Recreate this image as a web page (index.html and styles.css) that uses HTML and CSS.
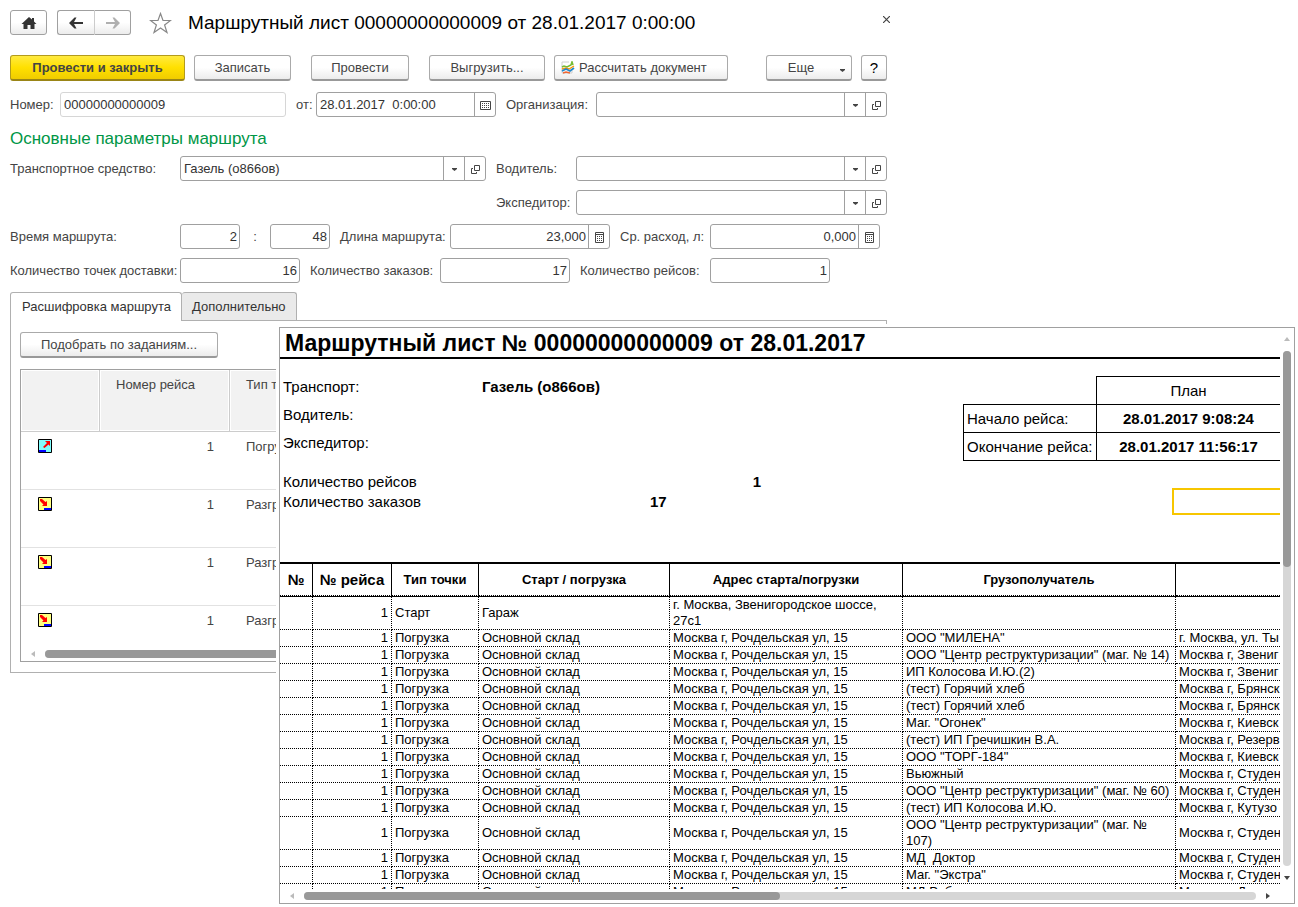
FILE: index.html
```html
<!DOCTYPE html>
<html lang="ru">
<head>
<meta charset="utf-8">
<title>Маршрутный лист</title>
<link rel="stylesheet" href="styles.css">
</head>
<body>
<svg width="0" height="0" class="sprite" aria-hidden="true">
  <symbol id="i-down" viewBox="0 0 5 3"><path d="M0 0H5V1L2.5 3L0 1z" fill="#444"/></symbol>
  <symbol id="i-open" viewBox="0 0 9 9"><path d="M3.5 .5H8.500V5.500H3.500zM2 3.500H.5V8.500H5.500V7" fill="none" stroke="#444"/></symbol>
  <symbol id="i-cal" viewBox="0 0 11 9"><path d="M.5 .5H10.500V8.500H.5z" fill="none" stroke="#444"/><path d="M2 2.500H9M2 4.500H9M2 6.500H9" stroke="#444" stroke-dasharray="1 1"/></symbol>
  <symbol id="i-calc" viewBox="0 0 9 11"><path d="M.5 .5H8.500V10.500H.5zM.5 2.500H8.500" fill="none" stroke="#444"/><path d="M2 4.500H7M2 6.500H7M2 8.500H7" stroke="#444" stroke-dasharray="1 1"/></symbol>
  <symbol id="i-load" viewBox="0 0 14 14"><path d="M.5 .5H13.500V13.500H.5z" fill="#80ffff" stroke="#000"/><path d="M1 12H8" stroke="#00f" stroke-width="2"/><path d="M7 2H12V7L10.500 5.500L6.500 9L5 8L9 4z" fill="#f00"/></symbol>
  <symbol id="i-unload" viewBox="0 0 14 14"><path d="M.5 .5H13.500V13.500H.5z" fill="#ffff80" stroke="#000"/><path d="M6 12H13" stroke="#00f" stroke-width="2"/><path d="M2 2H4L7.500 5L9 4V9H4L5.500 7.500L2 4z" fill="#f00"/></symbol>
</svg>
<main class="page">
  <form class="form">
    <header class="head">
      <button type="button" class="btn nav" aria-label="Домой"><svg width="16" height="12" viewBox="0 0 16 12"><path d="M8 0L11 2.600V1H13V4.400L15.500 7H13.500V12H9.500V8H6.500V12H2.500V7H.5z" fill="#333"/></svg></button>
      <div class="pair">
        <button type="button" class="btn nav" aria-label="Назад"><svg width="14" height="12" viewBox="0 0 14 12"><path d="M0 6L5.500 .5H7.500L5 5H14V7H5L7.500 11.500H5.500z" fill="#333"/></svg></button>
        <button type="button" class="btn nav" aria-label="Вперед"><svg width="14" height="12" viewBox="0 0 14 12"><path d="M14 6L8.500 .5H6.500L9 5H0V7H9L6.500 11.500H8.500z" fill="#b0b0b0"/></svg></button>
      </div>
      <svg class="star" width="23" height="22" viewBox="0 0 23 22"><path d="M11.500 1.500L14 8.500H21.500L15.600 13L18 20.500L11.500 16L5 20.500L7.400 13L1.500 8.500H9z" fill="none" stroke="#888" stroke-width="1.200"/></svg>
      <h1>Маршрутный лист 00000000000009 от 28.01.2017 0:00:00</h1>
      <button type="button" class="close" aria-label="Закрыть"><svg width="7" height="7" viewBox="0 0 7 7"><path d="M0 0L7 7M7 0L0 7" stroke="#444" stroke-width="1.200"/></svg></button>
    </header>

    <div class="bar">
      <button type="button" class="btn primary w175">Провести и закрыть</button>
      <button type="button" class="btn w97">Записать</button>
      <button type="button" class="btn w98 apart">Провести</button>
      <button type="button" class="btn w116 apart">Выгрузить...</button>
      <button type="button" class="btn w174 calc"><svg width="14" height="14" viewBox="0 0 14 14"><path d="M1 1H8M1 1V12H11V8" fill="none" stroke="#d0d0d0"/><path d="M1 6L3 5L6 6L10 4L11 1L12 4" fill="none" stroke="#7b3" stroke-width="1.600"/><path d="M1 8L5 7L8 8L13 5" fill="none" stroke="#f90" stroke-width="1.400"/><path d="M1 10L5 8L9 10L13 7" fill="none" stroke="#28c" stroke-width="1.800"/><path d="M2 12L5 11L9 12" fill="none" stroke="#e63" stroke-width="1.400"/></svg>Рассчитать документ</button>
      <button type="button" class="btn w86 more">Еще<svg width="5" height="3"><use href="#i-down"/></svg></button>
      <button type="button" class="btn w26 help">?</button>
    </div>

    <div class="row">
      <label for="num" class="l40">Номер:</label>
      <span class="field pale w226"><input id="num" value="00000000000009"></span>
      <label for="date" class="l10">от:</label>
      <span class="field w180"><input id="date" value="28.01.2017&nbsp; 0:00:00"><button type="button" aria-label="Календарь"><svg width="11" height="9"><use href="#i-cal"/></svg></button></span>
      <label for="org" class="l80">Организация:</label>
      <span class="field grow"><input id="org"><button type="button" aria-label="Выбрать"><svg width="5" height="3"><use href="#i-down"/></svg></button><button type="button" aria-label="Открыть"><svg width="9" height="9"><use href="#i-open"/></svg></button></span>
    </div>
    <h2>Основные параметры маршрута</h2>
    <div class="row">
      <label for="car" class="l160">Транспортное средство:</label>
      <span class="field w306"><input id="car" value="Газель (о866ов)"><button type="button" aria-label="Выбрать"><svg width="5" height="3"><use href="#i-down"/></svg></button><button type="button" aria-label="Открыть"><svg width="9" height="9"><use href="#i-open"/></svg></button></span>
      <label for="driver" class="l70">Водитель:</label>
      <span class="field grow"><input id="driver"><button type="button" aria-label="Выбрать"><svg width="5" height="3"><use href="#i-down"/></svg></button><button type="button" aria-label="Открыть"><svg width="9" height="9"><use href="#i-open"/></svg></button></span>
    </div>
    <div class="row indent">
      <label for="exp" class="l70">Экспедитор:</label>
      <span class="field grow"><input id="exp"><button type="button" aria-label="Выбрать"><svg width="5" height="3"><use href="#i-down"/></svg></button><button type="button" aria-label="Открыть"><svg width="9" height="9"><use href="#i-open"/></svg></button></span>
    </div>
    <div class="row">
      <label for="hours" class="l160">Время маршрута:</label>
      <span class="field num w60"><input id="hours" value="2"></span>
      <label for="mins" class="l10 colon">:</label>
      <span class="field num w60"><input id="mins" value="48"></span>
      <label for="len" class="l100">Длина маршрута:</label>
      <span class="field num w160"><input id="len" value="23,000"><button type="button" aria-label="Калькулятор"><svg width="9" height="11"><use href="#i-calc"/></svg></button></span>
      <label for="fuel" class="l80">Ср. расход, л:</label>
      <span class="field num w170"><input id="fuel" value="0,000"><button type="button" aria-label="Калькулятор"><svg width="9" height="11"><use href="#i-calc"/></svg></button></span>
    </div>
    <div class="row">
      <label for="pts" class="l160">Количество точек доставки:</label>
      <span class="field num w120"><input id="pts" value="16"></span>
      <label for="ords" class="l120">Количество заказов:</label>
      <span class="field num w130"><input id="ords" value="17"></span>
      <label for="trips" class="l120">Количество рейсов:</label>
      <span class="field num w120"><input id="trips" value="1"></span>
    </div>

    <div class="tabs" role="tablist">
      <button type="button" role="tab" aria-selected="true" class="tab active">Расшифровка маршрута</button>
      <button type="button" role="tab" aria-selected="false" class="tab">Дополнительно</button>
    </div>
    <section class="panel">
      <button type="button" class="btn w198">Подобрать по заданиям...</button>
      <div class="list">
        <table class="points">
          <colgroup><col class="c-ico"><col class="c-trip"><col></colgroup>
          <thead><tr><th></th><th>Номер рейса</th><th>Тип точки</th></tr></thead>
          <tbody>
            <tr><td><svg width="14" height="14"><use href="#i-load"/></svg></td><td class="r">1</td><td>Погрузка</td></tr>
            <tr><td><svg width="14" height="14"><use href="#i-unload"/></svg></td><td class="r">1</td><td>Разгрузка</td></tr>
            <tr><td><svg width="14" height="14"><use href="#i-unload"/></svg></td><td class="r">1</td><td>Разгрузка</td></tr>
            <tr><td><svg width="14" height="14"><use href="#i-unload"/></svg></td><td class="r">1</td><td>Разгрузка</td></tr>
          </tbody>
        </table>
        <div class="hbar"><svg width="4" height="6" viewBox="0 0 4 6"><path d="M4 0V6L0 3z" fill="#bbb"/></svg><div class="track"><div class="thumb wide"></div></div></div>
      </div>
    </section>
  </form>

  <section class="report">
    <div class="sheet">
      <h2 class="title">Маршрутный лист № 00000000000009 от 28.01.2017</h2>
      <div class="info">
        <dl class="facts">
          <dt>Транспорт:</dt><dd>Газель (о866ов)</dd>
          <dt>Водитель:</dt><dd></dd>
          <dt>Экспедитор:</dt><dd></dd>
        </dl>
        <table class="plan">
          <tr><td class="none"></td><td class="top c">План</td></tr>
          <tr><td class="first top">Начало рейса:</td><td class="top c b">28.01.2017 9:08:24</td></tr>
          <tr><td class="first top">Окончание рейса:</td><td class="top c b">28.01.2017 11:56:17</td></tr>
        </table>
      </div>
      <div class="counts">
        <dl>
          <dt>Количество рейсов</dt><dd class="trips">1</dd>
          <dt>Количество заказов</dt><dd class="orders">17</dd>
        </dl>
        <div class="cursor"></div>
      </div>
      <table class="data">
        <colgroup><col class="k1"><col class="k2"><col class="k3"><col class="k4"><col class="k5"><col class="k6"><col class="k7"></colgroup>
        <thead><tr><th class="big">№</th><th class="big">№ рейса</th><th>Тип точки</th><th>Старт / погрузка</th><th>Адрес старта/погрузки</th><th>Грузополучатель</th><th></th></tr></thead>
        <tbody>
          <tr><td></td><td>1</td><td>Старт</td><td>Гараж</td><td>г. Москва, Звенигородское шоссе, 27с1</td><td></td><td></td></tr>
          <tr><td></td><td>1</td><td>Погрузка</td><td>Основной склад</td><td>Москва г, Рочдельская ул, 15</td><td>ООО "МИЛЕНА"</td><td>г. Москва, ул. Ты</td></tr>
          <tr><td></td><td>1</td><td>Погрузка</td><td>Основной склад</td><td>Москва г, Рочдельская ул, 15</td><td>ООО "Центр реструктуризации" (маг. № 14)</td><td>Москва г, Звениг</td></tr>
          <tr><td></td><td>1</td><td>Погрузка</td><td>Основной склад</td><td>Москва г, Рочдельская ул, 15</td><td>ИП Колосова И.Ю.(2)</td><td>Москва г, Звениг</td></tr>
          <tr><td></td><td>1</td><td>Погрузка</td><td>Основной склад</td><td>Москва г, Рочдельская ул, 15</td><td>(тест) Горячий хлеб</td><td>Москва г, Брянск</td></tr>
          <tr><td></td><td>1</td><td>Погрузка</td><td>Основной склад</td><td>Москва г, Рочдельская ул, 15</td><td>(тест) Горячий хлеб</td><td>Москва г, Брянск</td></tr>
          <tr><td></td><td>1</td><td>Погрузка</td><td>Основной склад</td><td>Москва г, Рочдельская ул, 15</td><td>Маг. "Огонек"</td><td>Москва г, Киевск</td></tr>
          <tr><td></td><td>1</td><td>Погрузка</td><td>Основной склад</td><td>Москва г, Рочдельская ул, 15</td><td>(тест) ИП Гречишкин В.А.</td><td>Москва г, Резерв</td></tr>
          <tr><td></td><td>1</td><td>Погрузка</td><td>Основной склад</td><td>Москва г, Рочдельская ул, 15</td><td>ООО "ТОРГ-184"</td><td>Москва г, Киевск</td></tr>
          <tr><td></td><td>1</td><td>Погрузка</td><td>Основной склад</td><td>Москва г, Рочдельская ул, 15</td><td>Вьюжный</td><td>Москва г, Студен</td></tr>
          <tr><td></td><td>1</td><td>Погрузка</td><td>Основной склад</td><td>Москва г, Рочдельская ул, 15</td><td>ООО "Центр реструктуризации" (маг. № 60)</td><td>Москва г, Студен</td></tr>
          <tr><td></td><td>1</td><td>Погрузка</td><td>Основной склад</td><td>Москва г, Рочдельская ул, 15</td><td>(тест) ИП Колосова И.Ю.</td><td>Москва г, Кутузо</td></tr>
          <tr><td></td><td>1</td><td>Погрузка</td><td>Основной склад</td><td>Москва г, Рочдельская ул, 15</td><td class="wrap">ООО "Центр реструктуризации" (маг. № 107)</td><td>Москва г, Студен</td></tr>
          <tr><td></td><td>1</td><td>Погрузка</td><td>Основной склад</td><td>Москва г, Рочдельская ул, 15</td><td>МД&nbsp; Доктор</td><td>Москва г, Студен</td></tr>
          <tr><td></td><td>1</td><td>Погрузка</td><td>Основной склад</td><td>Москва г, Рочдельская ул, 15</td><td>Маг. "Экстра"</td><td>Москва г, Студен</td></tr>
          <tr><td></td><td>1</td><td>Погрузка</td><td>Основной склад</td><td>Москва г, Рочдельская ул, 15</td><td>МД Рабочая</td><td>Москва г, Дорого</td></tr>
        </tbody>
      </table>
    </div>
    <div class="vbar"><svg width="6" height="4" viewBox="0 0 6 4"><path d="M0 4H6L3 0z" fill="#bbb"/></svg><div class="track"><div class="thumb"></div></div><svg width="6" height="4" viewBox="0 0 6 4"><path d="M0 0H6L3 4z" fill="#444"/></svg></div>
    <div class="hbar"><svg width="4" height="6" viewBox="0 0 4 6"><path d="M4 0V6L0 3z" fill="#bbb"/></svg><div class="track"><div class="thumb"></div></div><svg width="4" height="6" viewBox="0 0 4 6"><path d="M0 0V6L4 3z" fill="#444"/></svg></div>
  </section>
</main>
</body>
</html>
```
FILE: styles.css
```css
* { box-sizing: border-box; }
body {
  margin: 0;
  background: #fff;
  color: #444;
  font: 13px/16px "Liberation Sans", Arial, sans-serif;
}
h1, h2, dl, dd { margin: 0; }
button, input { font: inherit; color: inherit; }
svg { flex: none; }
.sprite { display: none; }

.page {
  position: relative;
  min-height: 100vh;
  padding: 10px;
  overflow: hidden;
}
.form { max-width: 877px; }

/* buttons */
.btn {
  display: flex;
  align-items: center;
  justify-content: center;
  height: 26px;
  padding: 0;
  border: 1px solid #aaa;
  border-bottom: 2px solid #999;
  border-radius: 3px;
  background: linear-gradient(#fff 50%, #ececec);
  white-space: nowrap;
}
.primary {
  border-color: #b39b1c;
  border-bottom-color: #9a8516;
  background: linear-gradient(#ffea40, #ffe000 50%, #f0cc00);
  font-weight: bold;
}
.nav { width: 37px; height: 25px; border: 1px solid #a0a0a0; }

/* header */
.head { display: flex; align-items: center; height: 25px; }
.pair { display: flex; margin: 0 18px 0 10px; }
.pair .nav:first-child { width: 38px; border-right-color: #ccc; border-radius: 3px 0 0 3px; }
.pair .nav:last-child { width: 36px; border-left: 0; border-radius: 0 3px 3px 0; }
h1 {
  flex: 1;
  margin-left: 16px;
  color: #000;
  font-size: 19px;
  font-weight: normal;
  line-height: 24px;
  white-space: nowrap;
}
.close {
  display: flex;
  align-self: flex-start;
  padding: 6px 0;
  margin-right: -3px;
  border: 0;
  background: none;
}

/* command bar */
.bar { display: flex; gap: 9px; margin: 20px 0 11px; }
.bar .apart { margin-left: 11px; }
.calc { justify-content: flex-start; gap: 4px; padding-left: 6px; }
.more { position: relative; margin-left: auto; padding-right: 16px; }
.more svg { position: absolute; right: 6px; top: 13px; }
.help { color: #000; font-size: 15px; }

/* field rows */
.row { display: flex; align-items: center; gap: 10px; height: 25px; margin-bottom: 9px; }
.row label { white-space: nowrap; }
.indent { padding-left: 486px; }
.form h2 {
  height: 22px;
  margin: 11px 0 6px;
  color: #009646;
  font-size: 17px;
  font-weight: normal;
  line-height: 22px;
}
.field {
  display: flex;
  flex: none;
  height: 25px;
  border: 1px solid #a0a0a0;
  border-radius: 3px;
  overflow: hidden;
}
.field.grow { flex: 1; }
.field.pale { border-color: #d6d6d6; }
.field input {
  flex: 1;
  min-width: 0;
  padding: 0 3px;
  border: 0;
  outline: 0;
  background: none;
  color: #333;
}
.field.num input { padding: 0 2px; text-align: right; }
.field button {
  display: flex;
  align-items: center;
  justify-content: center;
  width: 21px;
  padding: 2px 0 0;
  border: 0;
  border-left: 1px solid #a0a0a0;
  background: none;
}
.l10 { width: 10px; }
.colon { text-align: center; }
.l40 { width: 40px; }
.l70 { width: 70px; }
.l80 { width: 80px; }
.l100 { width: 100px; }
.l120 { width: 120px; }
.l160 { width: 160px; }
.w26 { width: 26px; }
.w60 { width: 60px; }
.w86 { width: 86px; }
.w97 { width: 97px; }
.w98 { width: 98px; }
.w116 { width: 116px; }
.w120 { width: 120px; }
.w130 { width: 130px; }
.w160 { width: 160px; }
.w170 { width: 170px; }
.w174 { width: 174px; }
.w175 { width: 175px; }
.w180 { width: 180px; }
.w198 { width: 198px; }
.w226 { width: 226px; }
.w306 { width: 306px; }

/* tabs */
.tabs { display: flex; height: 28px; }
.tab {
  padding: 0 10px;
  border: 1px solid #b0b0b0;
  border-bottom: 0;
  border-radius: 3px 3px 0 0;
  background: #eaeaea;
  color: #333;
}
.tab + .tab { border-left: 0; }
.tab.active { height: 29px; padding-left: 11px; z-index: 1; background: #fff; }
.panel {
  height: 353px;
  padding: 11px 9px 10px;
  border: 1px solid #b0b0b0;
}
.list { margin-top: 11px; border: 1px solid #a0a0a0; }
.points { width: 100%; border-spacing: 0; table-layout: fixed; }
.c-ico { width: 79px; }
.c-trip { width: 130px; }
.points th {
  height: 62px;
  padding: 7px 16px;
  border-right: 1px solid #ccc;
  border-bottom: 1px solid #ccc;
  background: #f2f2f2;
  box-shadow: inset 0 0 0 1px #fff;
  font-weight: normal;
  text-align: left;
  vertical-align: top;
}
.points td {
  height: 58px;
  padding: 7px 16px;
  border-bottom: 1px solid #e2e2e2;
  vertical-align: top;
}
.points tr:last-child td { height: 41px; border-bottom: 0; }
.points thead tr:last-child th { height: 62px; }
.points td svg { display: block; margin-left: 1px; }
.points .r { text-align: right; }

/* scroll bars */
.hbar, .vbar { display: flex; align-items: center; }
.hbar { gap: 10px; padding: 0 10px; height: 14px; }
.vbar { flex-direction: column; gap: 10px; padding: 9px 0; }
.track { flex: 1; border-radius: 4px; background: #d6d6d6; }
.thumb { border-radius: 4px; background: #999; }
.hbar .track, .hbar .thumb { height: 8px; }
.hbar .thumb { width: 50%; }
.hbar .thumb.wide { width: 80%; }
.vbar .track, .vbar .thumb { width: 8px; }
.vbar .thumb { height: 42%; }

/* report window over the form */
.report {
  position: absolute;
  z-index: 2;
  left: 279px;
  top: 327px;
  right: 3px;
  bottom: 3px;
  display: grid;
  grid-template: minmax(0, 1fr) 14px / minmax(0, 1fr) 14px;
  border: 1px solid #a0a0a0;
  background: #fff;
  box-shadow: 0 0 0 3px #fff;
  color: #000;
}
.sheet { overflow: hidden; }
.title {
  padding: 0 5px;
  height: 31px;
  border-bottom: 2px solid #000;
  font-size: 23px;
  line-height: 30px;
  white-space: nowrap;
}
.info {
  display: flex;
  justify-content: space-between;
  padding-top: 14px;
  font-size: 15px;
  line-height: 28px;
}
.facts { display: grid; grid-template-columns: 199px auto; grid-auto-rows: 28px; padding-left: 3px; }
.facts dd, .counts dd, .b { font-weight: bold; }
.plan { margin-top: 3px; border-spacing: 0; line-height: 27px; border-bottom: 1px solid #000; border-bottom: 0; }
.plan td { height: 28px; padding: 0 3px; white-space: nowrap; }
.plan .top { border-top: 1px solid #000; }
.plan tr:last-child td { border-bottom: 1px solid #000; }
.plan .first { width: 133px; border-left: 1px solid #000; }
.plan .c { width: 184px; border-left: 1px solid #000; text-align: center; }
.counts {
  display: flex;
  justify-content: space-between;
  padding: 11px 0 0 3px;
  height: 101px;
  font-size: 15px;
  line-height: 20px;
}
.counts dl { display: grid; grid-template-columns: 367px 111px; grid-auto-rows: 20px; }
.counts .trips { text-align: right; }
.cursor {
  width: 108px;
  height: 27px;
  margin-top: 16px;
  border: 2px solid #f7c600;
  border-right: 0;
}
.data { width: 1330px; border-spacing: 0; table-layout: fixed; }
.k1 { width: 33px; }
.k2 { width: 79px; }
.k3 { width: 87px; }
.k4 { width: 191px; }
.k5 { width: 233px; }
.k6 { width: 273px; }
.data th {
  height: 34px;
  padding: 0;
  border-top: 2px solid #000;
  border-right: 1px solid #000;
  border-bottom: 1px dotted #000;
}
.data .big { font-size: 15px; }
.data td {
  padding: 0 3px;
  border-right: 1px dotted #000;
  border-bottom: 1px dotted #000;
  white-space: nowrap;
}
.data tr:first-child td { border-top: 1px solid #000; white-space: normal; }
.data .wrap { white-space: normal; }
.data td:nth-child(2) { text-align: right; }
```
